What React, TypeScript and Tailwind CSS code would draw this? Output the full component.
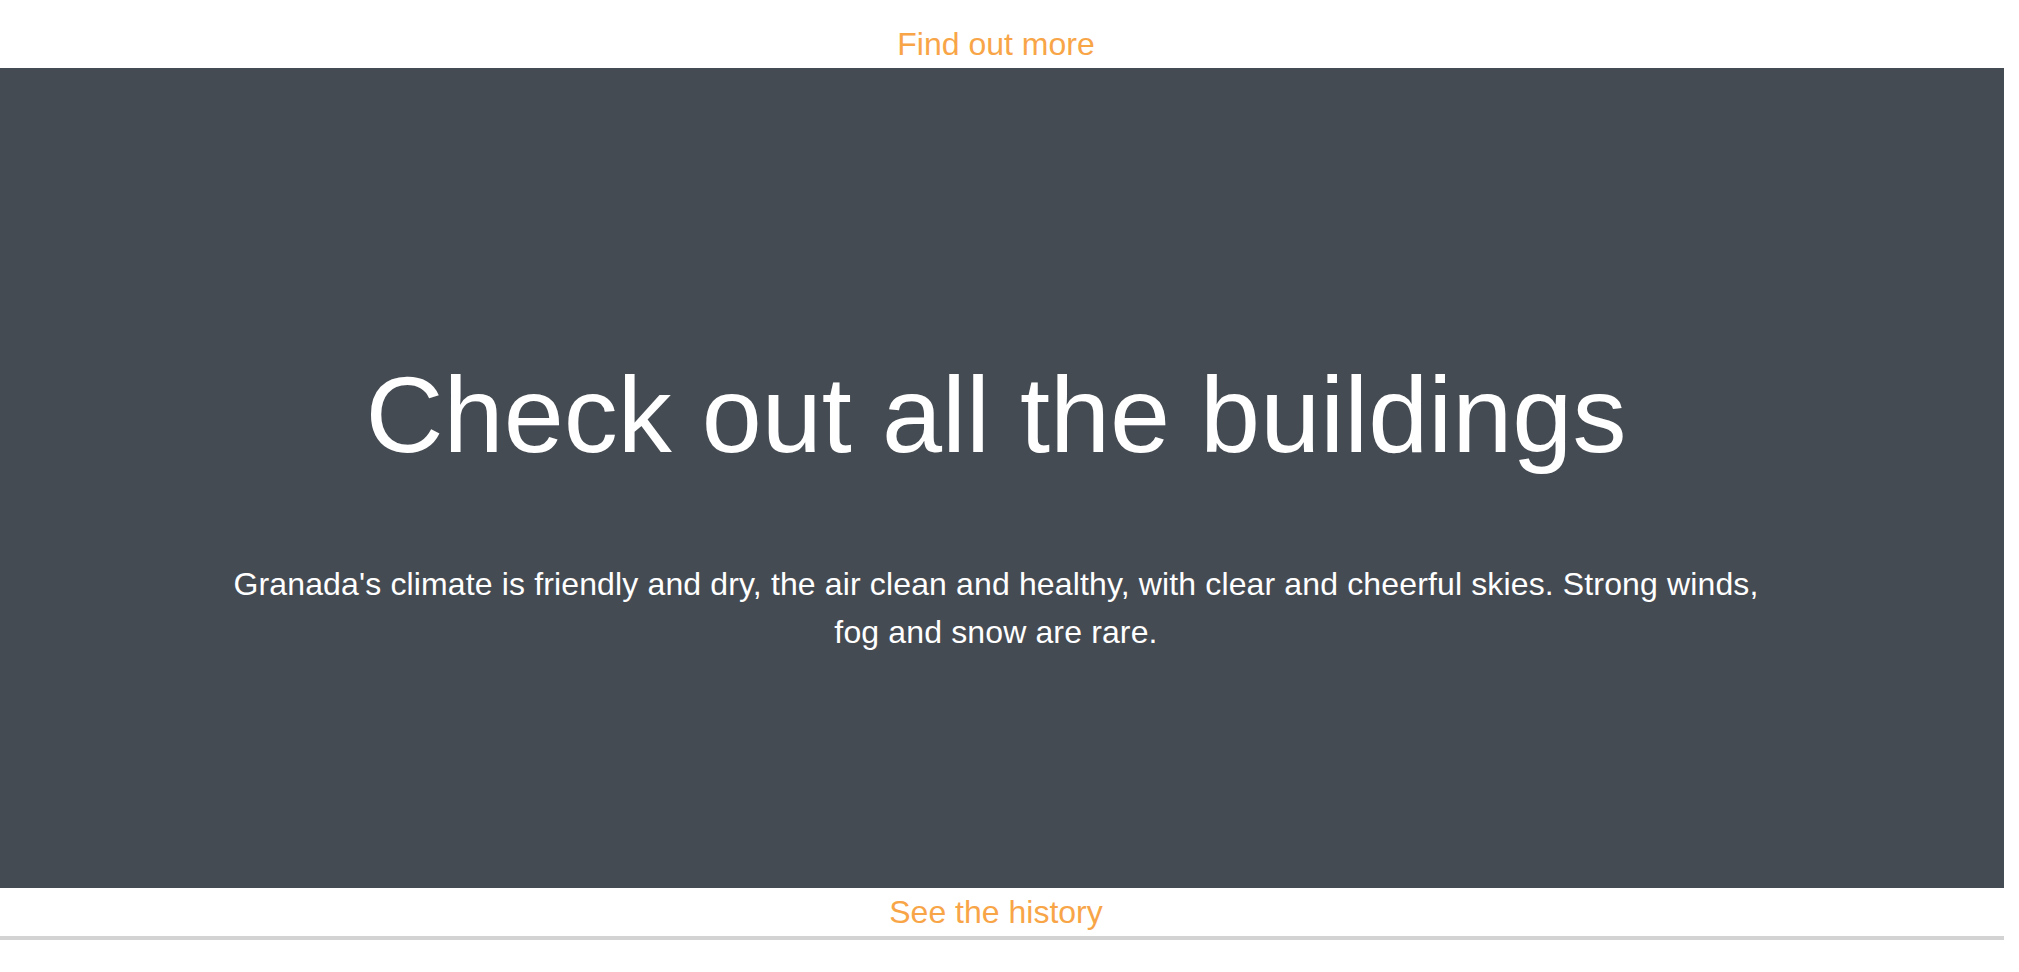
const font = { fontFamily: '"Liberation Sans", Arial, Helvetica, sans-serif' };

// orange link row above / below the hero
const LinkRow = ({ label, className }: { label: string; className: string }) => (
  <div className={`w-[1992px] text-center ${className}`}>
    <a href="#" className="text-[32px] leading-[36px] text-[#f8a548] no-underline">
      {label}
    </a>
  </div>
);

export default function App() {
  return (
    <div className="w-[2019px] h-[972px] bg-white overflow-hidden" style={font}>
      <div className="w-[2004px]">
        <LinkRow label="Find out more" className="h-[68px] pt-[26px]" />

        <section className="h-[820px] bg-[#454b53] pt-[293px]">
          <div className="w-[1992px] flex flex-col items-center text-white text-center">
            <h1 className="text-[108px] leading-none font-normal">
              Check out all the buildings
            </h1>
            <p className="mt-[91px] max-w-[1560px] text-[32px] leading-[48px] tracking-[0.14px]">
              Granada's climate is friendly and dry, the air clean and healthy, with clear and
              cheerful skies. Strong winds, fog and snow are rare.
            </p>
          </div>
        </section>

        <LinkRow label="See the history" className="h-[48px] pt-[6px]" />
        <div className="h-[4px] bg-[#d3d3d3]" />
      </div>
    </div>
  );
}
